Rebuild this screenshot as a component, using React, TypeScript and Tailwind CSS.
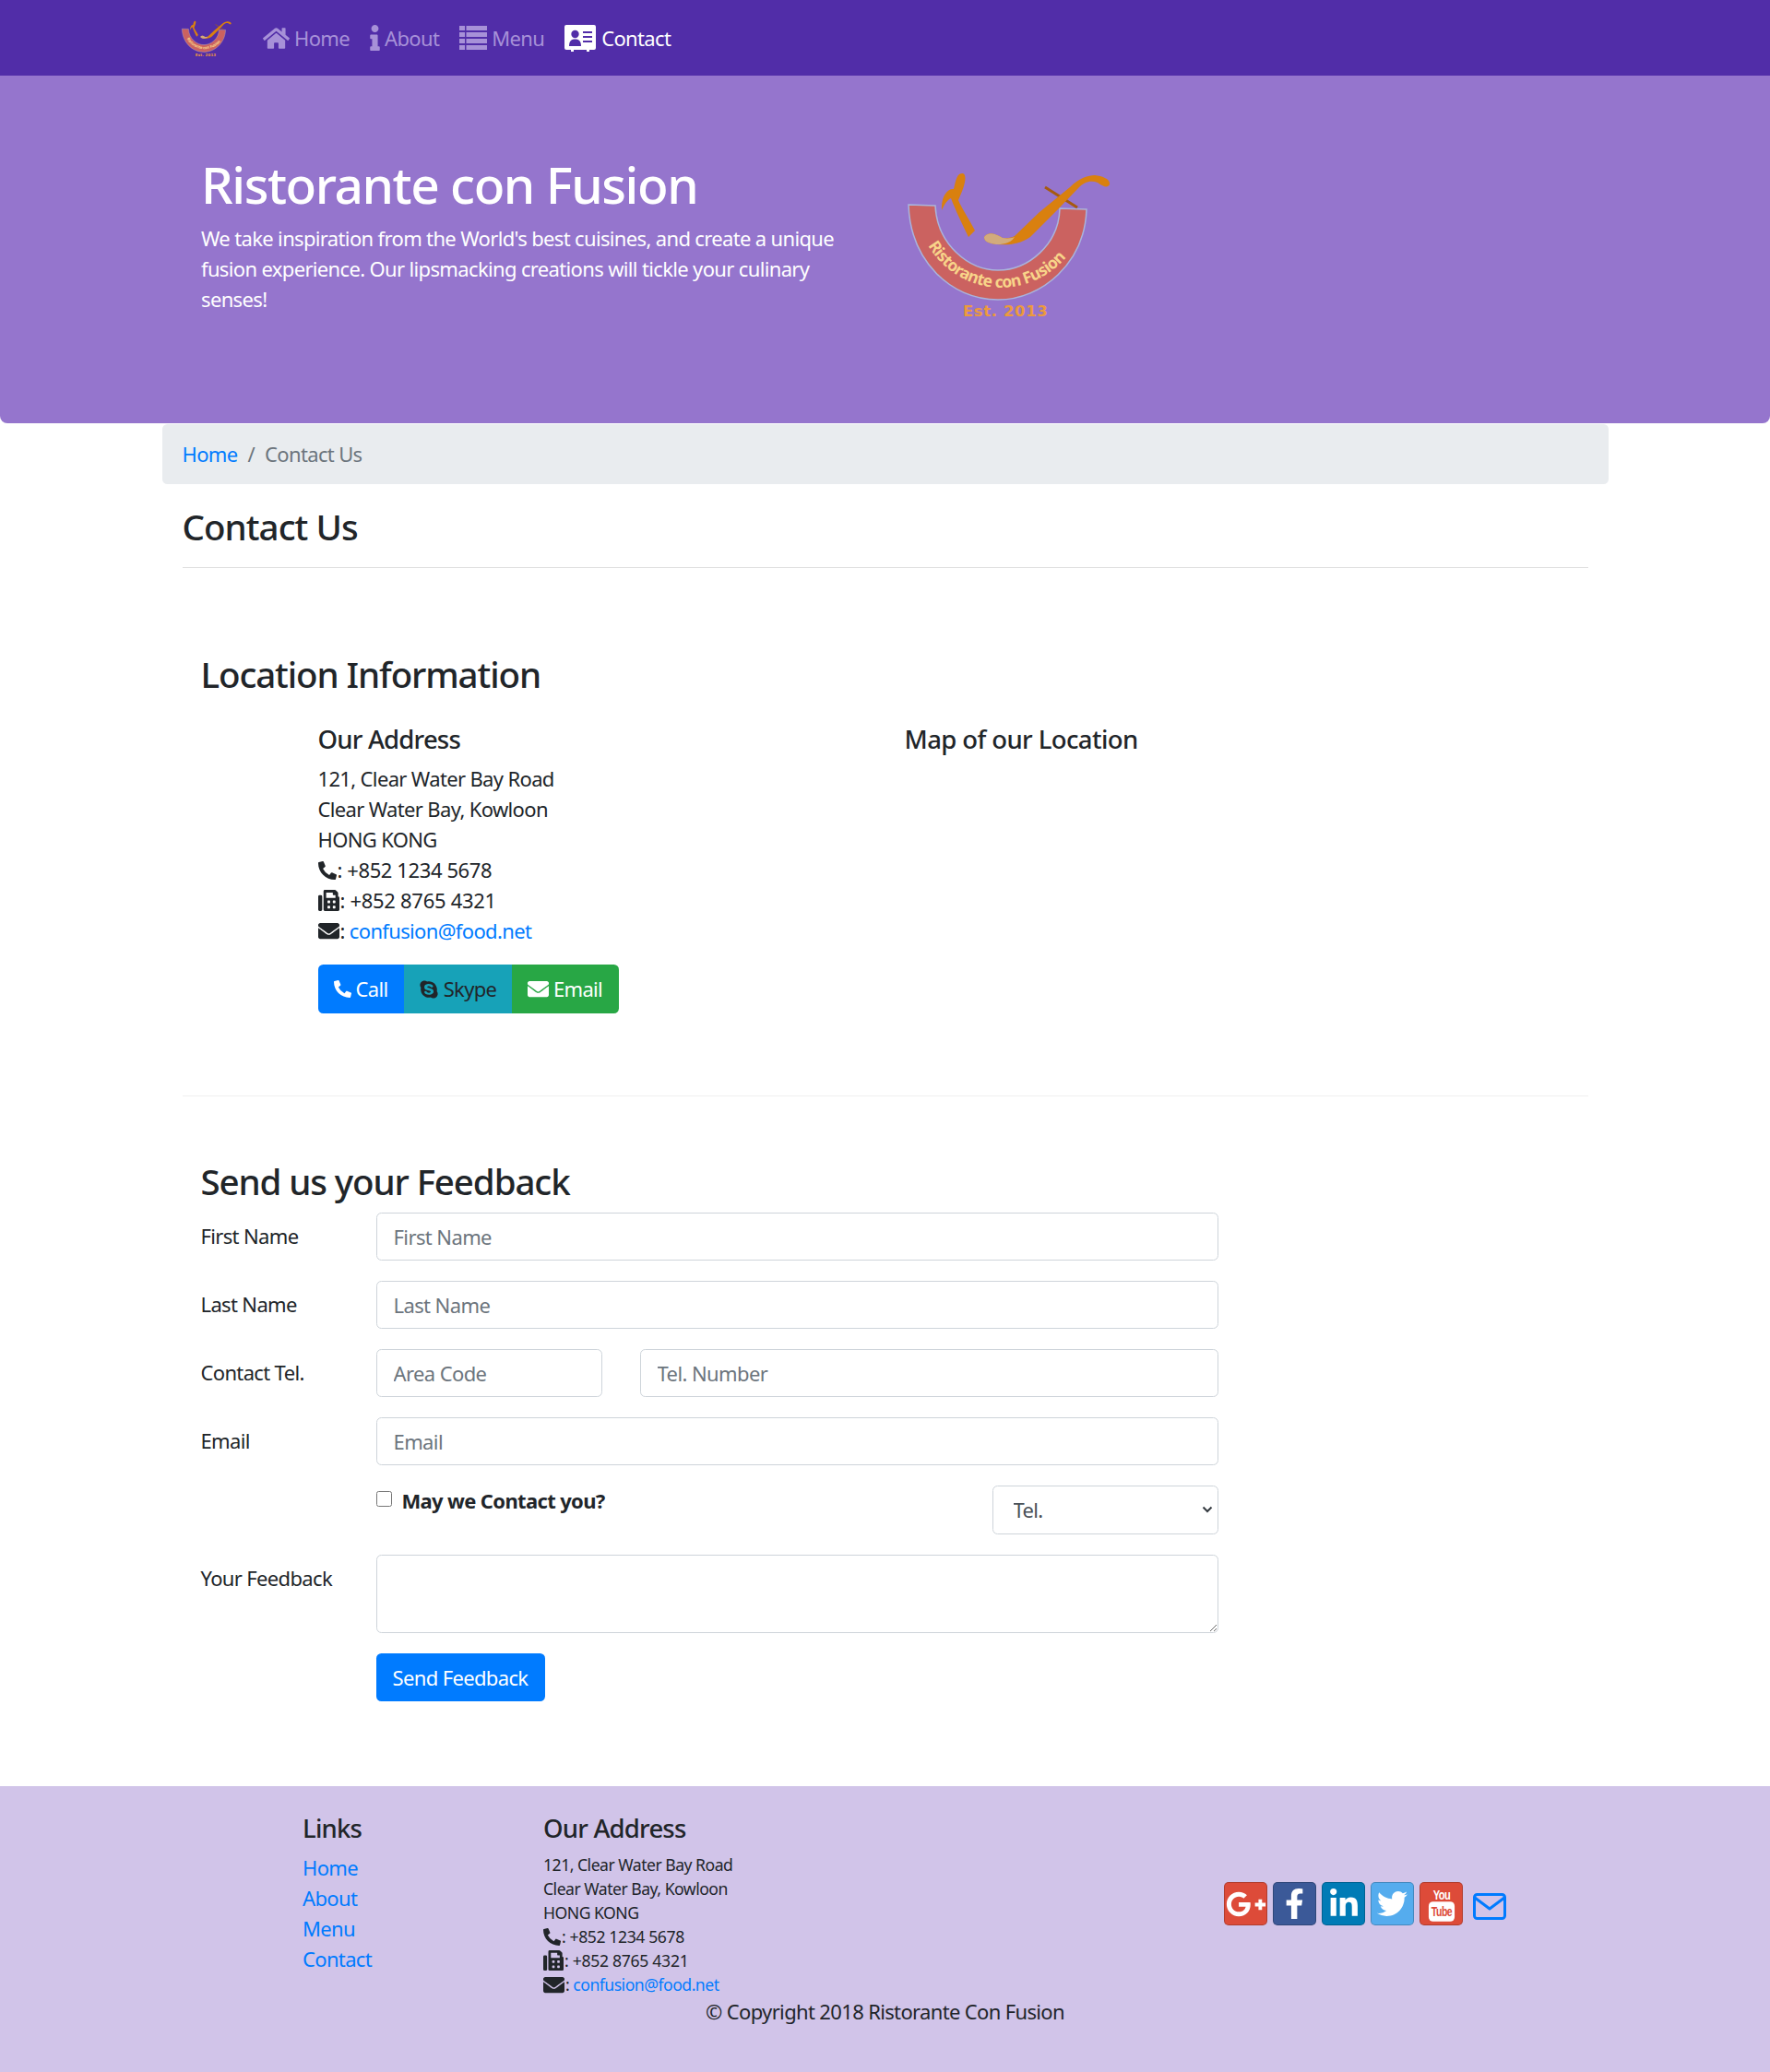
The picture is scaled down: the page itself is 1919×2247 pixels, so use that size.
import React from "react";
import {
  FaHome,
  FaInfo,
  FaPhoneAlt,
  FaFax,
  FaEnvelope,
  FaSkype,
  FaGooglePlusG,
  FaFacebookF,
  FaLinkedinIn,
  FaTwitter,
} from "react-icons/fa";

const Logo = ({ className }: { className: string }) => (
  <svg viewBox="0 0 260 200" className={className}>
    <defs>
      <path id="logo-arc" d="M46 106 C66 139 98 152 125 152 C152 152 188 139 209 100" />
    </defs>
    <path
      d="M25 62 L54 63 C56 105 90 133 122 133 C155 133 188 105 189 66 L218 67 C216 125 170 165 122 165 C70 165 27 122 25 62 Z"
      fill="#cb6260"
      stroke="#a9b4dc"
      strokeWidth="1.5"
    />
    <text fill="#f8d489" fontSize="17.5" fontWeight="700" fontFamily="Noto Sans, sans-serif">
      <textPath href="#logo-arc">Ristorante con Fusion</textPath>
    </text>
    <text x="84" y="183" fill="#ec9a3c" fontSize="16.5" fontWeight="700" letterSpacing="0.6" fontFamily="DejaVu Sans, sans-serif">
      Est. 2013
    </text>
    <path
      d="M61 68 C60 52 68 44 74 45 C77 32 78 28 84 28 C89 30 86 42 79 57 C82 65 91 78 97 90 L90 97 C84 85 76 68 71 55 C68 56 64 61 61 68 Z"
      fill="#d9800f"
    />
    <line x1="173" y1="43" x2="208" y2="65" stroke="#a65a10" strokeWidth="3" />
    <path
      d="M107 97 C112 90 120 94 127 98 C133 99 138 97 140 96 L167 70 L200 43 C210 33 220 30 227 30 C235 31 244 34 243 40 C241 44 237 43 230 38 C222 35 215 38 210 43 L187 67 L157 97 C145 105 135 106 120 105 C112 104 107 102 107 97 Z"
      fill="#d9800f"
    />
    <path d="M107 97 C112 90 120 94 127 98 C133 99 138 98 140 97 C135 105 125 105 120 105 C112 104 107 102 107 97 Z" fill="#d2ab7d" />
  </svg>
);

const ListIcon = () => (
  <svg viewBox="0 0 30 26" className="w-[30px] h-[26px] mr-[5px]" fill="#a791d8">
    <rect x="0" y="0" width="6" height="5" />
    <rect x="0" y="7" width="6" height="5" />
    <rect x="0" y="14" width="6" height="5" />
    <rect x="0" y="21" width="6" height="5" />
    <rect x="7.5" y="0" width="22.5" height="5" />
    <rect x="7.5" y="7" width="22.5" height="5" />
    <rect x="7.5" y="14" width="22.5" height="5" />
    <rect x="7.5" y="21" width="22.5" height="5" />
  </svg>
);

const CardIcon = () => (
  <svg viewBox="0 0 34 29" className="w-[34px] h-[29px] mr-[6px]">
    <path
      d="M2 0 H32 a2 2 0 0 1 2 2 V25 a2 2 0 0 1 -2 2 H27 V29 H24 V27 H10 V29 H7 V27 H2 a2 2 0 0 1 -2 -2 V2 a2 2 0 0 1 2 -2 Z"
      fill="#fff"
    />
    <circle cx="11.5" cy="10" r="4.2" fill="#512da8" />
    <path d="M5 23 C5 17 8 15.5 11.5 15.5 C15 15.5 18 17 18 23 Z" fill="#512da8" />
    <rect x="20" y="7" width="10" height="2" fill="#512da8" />
    <rect x="20" y="12" width="10" height="2" fill="#512da8" />
    <rect x="20" y="17" width="10" height="2" fill="#512da8" />
  </svg>
);

const Address = ({ small }: { small?: boolean }) => (
  <div className={small ? "text-[17.6px] leading-[26px] tracking-[-0.5px]" : "text-[22px] leading-[33px] tracking-[-0.65px]"}>
    <div>121, Clear Water Bay Road</div>
    <div>Clear Water Bay, Kowloon</div>
    <div>HONG KONG</div>
    <div className="flex items-center tracking-[-0.4px]">
      <FaPhoneAlt className={small ? "text-[19px] mr-[1px]" : "text-[20px] mr-[1px]"} />
      <span>: +852 1234 5678</span>
    </div>
    <div className="flex items-center tracking-[-0.3px]">
      <FaFax className={small ? "text-[22px] mr-[1px]" : "text-[23px] mr-[1px]"} />
      <span>: +852 8765 4321</span>
    </div>
    <div className="flex items-center">
      <FaEnvelope className="text-[23px] mr-[1px]" />
      <span>
        : <a href="#" className="text-[#007bff]">confusion@food.net</a>
      </span>
    </div>
  </div>
);

const Field = ({ label, children }: { label: string; children: React.ReactNode }) => (
  <div className="flex mb-[22px]">
    <label className="w-[190px] shrink-0 pt-[9px]">{label}</label>
    {children}
  </div>
);

const inputCls =
  "h-[52px] border border-[#ced4da] rounded-[5.5px] px-[18px] text-[22px] tracking-[-0.6px] placeholder:text-[#6c757d] outline-none min-w-0";

const socialCls = "w-[47px] h-[47px] rounded-[5px] border border-black/20 text-white flex items-center justify-center";

export default function App() {
  return (
    <div className="font-['Noto_Sans',sans-serif] text-[22px] leading-[33px] text-[#212529] tracking-[-0.65px] bg-white">
      {/* NAV */}
      <nav className="h-[82px] bg-[#512da8] flex items-center pl-[197px]">
        <Logo className="w-[64px] h-[49px] -ml-[6px] -mt-[1px]" />
        <div className="flex items-center ml-[30px]">
          <a href="#" className="flex items-center mr-[22px]">
            <FaHome className="text-[29px] mr-[5px] text-[#a791d8]" />
            <span className="text-[#a791d8]">Home</span>
          </a>
          <a href="#" className="flex items-center mr-[22px]">
            <FaInfo className="w-[11px] h-[28px] mr-[5px] text-[#a791d8]" />
            <span className="text-[#a791d8]">About</span>
          </a>
          <a href="#" className="flex items-center mr-[22px]">
            <ListIcon />
            <span className="text-[#a791d8]">Menu</span>
          </a>
          <a href="#" className="flex items-center text-white">
            <CardIcon />
            <span>Contact</span>
          </a>
        </div>
      </nav>

      {/* JUMBOTRON */}
      <header className="h-[377px] bg-[#9575cd] rounded-b-[8px] flex pl-[218px] text-white">
        <div className="w-[742px] pt-[85px] pr-[40px]">
          <h1 className="text-[55px] leading-[66px] font-medium mb-[9px] tracking-[-1.45px]">Ristorante con Fusion</h1>
          <p>
            We take inspiration from the World's best cuisines, and create a unique fusion experience. Our lipsmacking
            creations will tickle your culinary senses!
          </p>
        </div>
        <div className="pt-[78px]">
          <Logo className="w-[260px] h-[200px]" />
        </div>
      </header>

      <main className="w-[1568px] mx-auto">
        <div className="h-[65px] bg-[#e9ecef] rounded-[5.5px] px-[22px] flex items-center mt-[1px]">
          <a href="#" className="text-[#007bff]">Home</a>
          <span className="text-[#6c757d] px-[11px]">/</span>
          <span className="text-[#6c757d]">Contact Us</span>
        </div>

        <div className="px-[22px]">
          <h3 className="text-[38.5px] leading-[46px] font-medium mt-[23px] tracking-[-0.95px]">Contact Us</h3>
          <hr className="border-[#dfdfdf] mt-[21px]" />

          {/* LOCATION */}
          <section className="px-[20px]">
            <h2 className="text-[38.5px] leading-[46px] font-medium mt-[92px] tracking-[-1.1px]">Location Information</h2>
            <div className="flex pl-[127px] mt-[31px]">
              <div className="w-[636px]">
                <h5 className="text-[27.5px] leading-[33px] font-medium mb-[10px] tracking-[-0.8px]">Our Address</h5>
                <Address />
                <div className="flex mt-[20px] h-[53px] w-[326px] text-[22px] rounded-[5.5px] overflow-hidden">
                  <a href="#" className="w-[93px] bg-[#007bff] text-white flex items-center justify-center">
                    <FaPhoneAlt className="text-[19px] mr-[5px]" />
                    Call
                  </a>
                  <a href="#" className="w-[117px] bg-[#17a2b8] text-[#212529] flex items-center justify-center">
                    <FaSkype className="text-[22px] mr-[5px]" />
                    Skype
                  </a>
                  <a href="#" className="w-[116px] bg-[#28a745] text-white flex items-center justify-center">
                    <FaEnvelope className="text-[23px] mr-[5px]" />
                    Email
                  </a>
                </div>
              </div>
              <h5 className="text-[27.5px] leading-[33px] font-medium tracking-[-0.6px]">Map of our Location</h5>
            </div>
          </section>

          <hr className="border-[#efefef] mt-[89px]" />

          {/* FEEDBACK */}
          <section className="px-[20px]">
            <h2 className="text-[38.5px] leading-[46px] font-medium mt-[69px] mb-[11px] tracking-[-1.1px]">Send us your Feedback</h2>
            <div className="w-[1103px]">
              <Field label="First Name">
                <input placeholder="First Name" className={`${inputCls} flex-1`} />
              </Field>
              <Field label="Last Name">
                <input placeholder="Last Name" className={`${inputCls} flex-1`} />
              </Field>
              <Field label="Contact Tel.">
                <input placeholder="Area Code" className={`${inputCls} w-[245px] mr-[41px]`} />
                <input placeholder="Tel. Number" className={`${inputCls} flex-1`} />
              </Field>
              <Field label="Email">
                <input placeholder="Email" className={`${inputCls} flex-1`} />
              </Field>
              <div className="flex justify-between pl-[190px] mb-[22px]">
                <label className="flex items-start font-bold">
                  <input type="checkbox" className="w-[17px] h-[17px] mt-[6px] mr-[11px]" />
                  May we Contact you?
                </label>
                <div className="relative w-[245px] h-[53px]">
                  <select className="appearance-none w-full h-full border border-[#ced4da] rounded-[5.5px] pl-[22px] bg-white text-[#495057]">
                    <option>Tel.</option>
                  </select>
                  <svg viewBox="0 0 12 8" className="absolute right-[6px] top-[22px] w-[12px] h-[8px]" fill="none" stroke="#343a40" strokeWidth="2">
                    <path d="M1.5 1.5 L6 6 L10.5 1.5" />
                  </svg>
                </div>
              </div>
              <Field label="Your Feedback">
                <textarea className="flex-1 h-[85px] border border-[#ced4da] rounded-[5.5px] outline-none" />
              </Field>
              <div className="pl-[190px]">
                <button className="h-[52px] w-[183px] bg-[#007bff] text-white rounded-[5.5px]">Send Feedback</button>
              </div>
            </div>
          </section>
        </div>
      </main>

      {/* FOOTER */}
      <footer className="h-[310px] bg-[#d1c4e9] mt-[92px]">
        <div className="flex pl-[328px] pt-[29px] h-[228px]">
          <div className="w-[261px]">
            <h5 className="text-[27.5px] leading-[33px] font-medium mb-[10px] tracking-[-0.8px]">Links</h5>
            <ul>
              <li><a href="#" className="text-[#007bff]">Home</a></li>
              <li><a href="#" className="text-[#007bff]">About</a></li>
              <li><a href="#" className="text-[#007bff]">Menu</a></li>
              <li><a href="#" className="text-[#007bff]">Contact</a></li>
            </ul>
          </div>
          <div className="w-[738px]">
            <h5 className="text-[27.5px] leading-[33px] font-medium mb-[10px] tracking-[-0.8px]">Our Address</h5>
            <Address small />
          </div>
          <div className="flex items-center h-[47px] mt-[75px] gap-[6px]">
            <a href="#" className={`${socialCls} bg-[#dd4b39]`}>
              <FaGooglePlusG className="text-[44px]" />
            </a>
            <a href="#" className={`${socialCls} bg-[#3b5998]`}>
              <FaFacebookF className="text-[33px]" />
            </a>
            <a href="#" className={`${socialCls} bg-[#007bb6]`}>
              <FaLinkedinIn className="text-[34px]" />
            </a>
            <a href="#" className={`${socialCls} bg-[#55acee]`}>
              <FaTwitter className="text-[33px]" />
            </a>
            <a href="#" className={`${socialCls} bg-[#dd4b39] overflow-visible`}>
              <svg viewBox="0 0 32 40" className="w-[30px] h-[38px] overflow-visible">
                <text x="16" y="15" textAnchor="middle" fontSize="15" fontWeight="700" fill="#fff" textLength="20" lengthAdjust="spacingAndGlyphs" fontFamily="Liberation Sans, sans-serif">
                  You
                </text>
                <rect x="1" y="17" width="30" height="23" rx="5" fill="#fff" />
                <text x="16" y="34" textAnchor="middle" fontSize="15" fontWeight="700" fill="#dd4b39" textLength="24" lengthAdjust="spacingAndGlyphs" fontFamily="Liberation Sans, sans-serif">
                  Tube
                </text>
              </svg>
            </a>
            <a href="#" className="ml-[5px] mt-[5px]">
              <svg viewBox="0 0 36 29" className="w-[36px] h-[29px]" fill="none" stroke="#007bff" strokeWidth="3" strokeLinejoin="round">
                <rect x="1.5" y="1.5" width="33" height="26" rx="3" />
                <path d="M2 5 L18 17 L34 5" />
              </svg>
            </a>
          </div>
        </div>
        <p className="text-center">© Copyright 2018 Ristorante Con Fusion</p>
      </footer>
    </div>
  );
}
